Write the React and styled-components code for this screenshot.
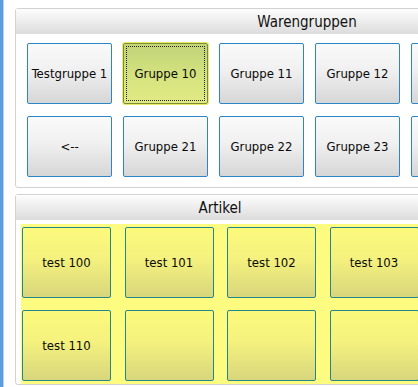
import React from 'react'
import styled, { createGlobalStyle } from 'styled-components'

const GlobalStyle = createGlobalStyle`
  body {
    margin: 0;
    background: #fff;
    overflow: hidden;
    font-family: Tahoma, "DejaVu Sans Condensed", "DejaVu Sans", sans-serif;
  }
`

const Screen = styled.div`
  display: flex;
  width: 418px;
  height: 387px;
  overflow: hidden;
`

const SideStrip = styled.div`
  flex: 0 0 4px;
  background: linear-gradient(to right, #5a9ee0 0, #5a9ee0 3px, #b4d4f2 3px);
`

const Content = styled.div`
  display: flex;
  flex-direction: column;
  gap: 6px;
  padding: 8px 0 0 11px;
`

const Panel = styled.section`
  width: ${p => p.$width}px;
  flex: 0 0 auto;
  border: 1px solid #d2d2d2;
  border-radius: 3px;
  background: #fff;
`

const PanelHeader = styled.div`
  height: 25px;
  display: flex;
  align-items: center;
  justify-content: center;
  background: linear-gradient(#fdfdfd, #dcdcdc);
  font-size: 15px;
  color: #111;
`

const GroupGrid = styled.div`
  display: grid;
  grid-template-columns: repeat(6, 85px);
  grid-auto-rows: 61px;
  column-gap: 11px;
  row-gap: 12px;
  padding: 9px 0 10px 11px;
`

const GroupButton = styled.button`
  position: relative;
  border: 1px solid ${p => (p.$active ? '#7d8c34' : '#2a86c6')};
  border-radius: 2px;
  background: ${p =>
    p.$active
      ? 'linear-gradient(#c5d77a 0, #c5d77a 15%, #d3e27e 50%, #e2ea84 100%)'
      : 'linear-gradient(#fafafa, #f0f0f0 45%, #d6d6d6)'};
  box-shadow: ${p => (p.$active ? '0 0 0 1px #e8ec62' : 'none')};
  font-family: inherit;
  font-size: 13px;
  color: #0a0a0a;
  padding: 0;
  &::after {
    content: '';
    display: ${p => (p.$active ? 'block' : 'none')};
    position: absolute;
    inset: 2px;
    border: 1px dotted #222;
  }
`

const ArticleArea = styled.div`
  margin: 4px 6px 0 5px;
  padding: 3px 0 3px 1px;
  background: #fdfc80;
  display: grid;
  grid-template-columns: repeat(4, 89px);
  grid-auto-rows: 71px;
  column-gap: 13.5px;
  row-gap: 12px;
`

const ArticleButton = styled.button`
  border: 1px solid #23878a;
  border-radius: 2px;
  background: linear-gradient(#fcfa7c, #f4f17e 45%, #d8d67c);
  font-family: inherit;
  font-size: 13px;
  color: #0a0a0a;
  padding: 0;
`

// columns past the window edge show no readable label in the screenshot
const groups = [
  ['Testgruppe 1', 'Gruppe 10', 'Gruppe 11', 'Gruppe 12', '', ''],
  ['<--', 'Gruppe 21', 'Gruppe 22', 'Gruppe 23', '', ''],
]

const articles = ['test 100', 'test 101', 'test 102', 'test 103', 'test 110', '', '', '']

export default function App() {
  return (
    <Screen>
      <GlobalStyle />
      <SideStrip />
      <Content>
        <Panel $width={582}>
          <PanelHeader>Warengruppen</PanelHeader>
          <GroupGrid>
            {groups.flat().map((g, i) => (
              <GroupButton key={i} $active={g === 'Gruppe 10'}>{g}</GroupButton>
            ))}
          </GroupGrid>
        </Panel>
        <Panel $width={408}>
          <PanelHeader>Artikel</PanelHeader>
          <ArticleArea>
            {articles.map((a, i) => (
              <ArticleButton key={i}>{a}</ArticleButton>
            ))}
          </ArticleArea>
        </Panel>
      </Content>
    </Screen>
  )
}
